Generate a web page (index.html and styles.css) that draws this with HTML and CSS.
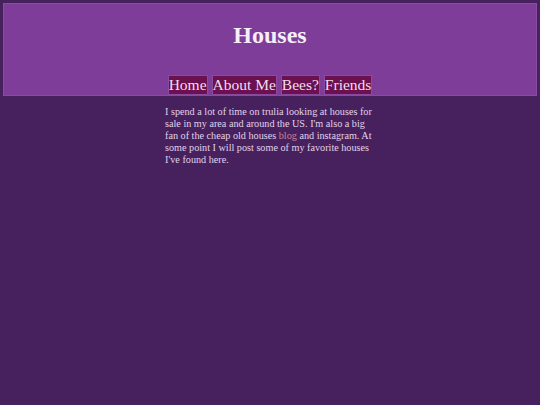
FILE: index.html
```html
<!DOCTYPE html>
<html>
<head>
<meta charset="utf-8">
<title>Houses</title>
<link rel="stylesheet" href="styles.css">
</head>
<body>
<header class="banner">
  <h1 class="title">Houses</h1>
  <nav class="nav">
    <a class="nav-btn" href="#">Home</a>
    <a class="nav-btn" href="#">About Me</a>
    <a class="nav-btn" href="#">Bees?</a>
    <a class="nav-btn" href="#">Friends</a>
  </nav>
</header>
<main class="content">
  <p class="intro">I spend a lot of time on trulia looking at houses for sale in my area and around the US. I'm also a big fan of the cheap old houses <a class="link" href="#">blog</a> and instagram. At some point I will post some of my favorite houses I've found here.</p>
</main>
</body>
</html>
```
FILE: styles.css
```css
html, body {
  margin: 0;
  padding: 0;
}
body {
  background: #46215e;
  font-family: "Liberation Serif", "Times New Roman", serif;
  padding: 3px;
  min-height: 399px;
}
.banner {
  background: #7d3d98;
  border: 1px solid #8a4aa3;
  padding-top: 17px;
  text-align: center;
}
.title {
  margin: 0;
  font-size: 24px;
  font-weight: bold;
  color: #f6eef8;
  line-height: 28px;
}
.nav {
  margin-top: 26px;
  font-size: 0;
}
.nav-btn {
  display: inline-block;
  font-size: 15.5px;
  line-height: 18px;
  color: #f3dcec;
  background: #6b1150;
  border: 1px solid #8c4a9e;
  text-decoration: none;
  margin: 0 2px;
  padding: 0;
}
.content {
  width: 210px;
  margin: 0 auto;
}
.intro {
  margin: 10px 0 0;
  font-size: 10.2px;
  line-height: 12px;
  color: #e2d2ea;
}
.link {
  color: #cf8296;
  text-decoration: none;
}
```
